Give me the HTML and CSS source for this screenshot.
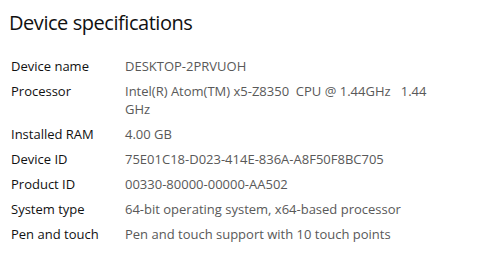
FILE: index.html
```html
<!DOCTYPE html>
<html>
<head>
<meta charset="utf-8">
<link rel="stylesheet" href="styles.css">
</head>
<body>
<div class="page">
  <h1 class="title">Device specifications</h1>
  <div class="specs">
    <div class="label">Device name</div><div class="value">DESKTOP-2PRVUOH</div>
    <div class="label">Processor</div><div class="value">Intel(R) Atom(TM) x5-Z8350  CPU @ 1.44GHz   1.44 GHz</div>
    <div class="label">Installed RAM</div><div class="value">4.00 GB</div>
    <div class="label">Device ID</div><div class="value">75E01C18-D023-414E-836A-A8F50F8BC705</div>
    <div class="label">Product ID</div><div class="value">00330-80000-00000-AA502</div>
    <div class="label">System type</div><div class="value">64-bit operating system, x64-based processor</div>
    <div class="label">Pen and touch</div><div class="value">Pen and touch support with 10 touch points</div>
  </div>
</div>
</body>
</html>
```
FILE: styles.css
```css
html, body {
  margin: 0;
  padding: 0;
  background: #ffffff;
}
.page {
  font-family: "Open Sans", "Noto Sans", sans-serif;
  padding: 8px 0 0 9px;
}
.title {
  margin: 0;
  font-size: 20px;
  font-weight: 400;
  letter-spacing: -0.45px;
  line-height: 30px;
  color: #111;
}
.specs {
  display: grid;
  grid-template-columns: 114px 318px;
  row-gap: 7px;
  margin-top: 19px;
  margin-left: 2px;
  font-size: 13px;
  line-height: 18px;
}
.label {
  color: #111;
}
.value {
  color: #595959;
  white-space: pre-wrap;
}
```
